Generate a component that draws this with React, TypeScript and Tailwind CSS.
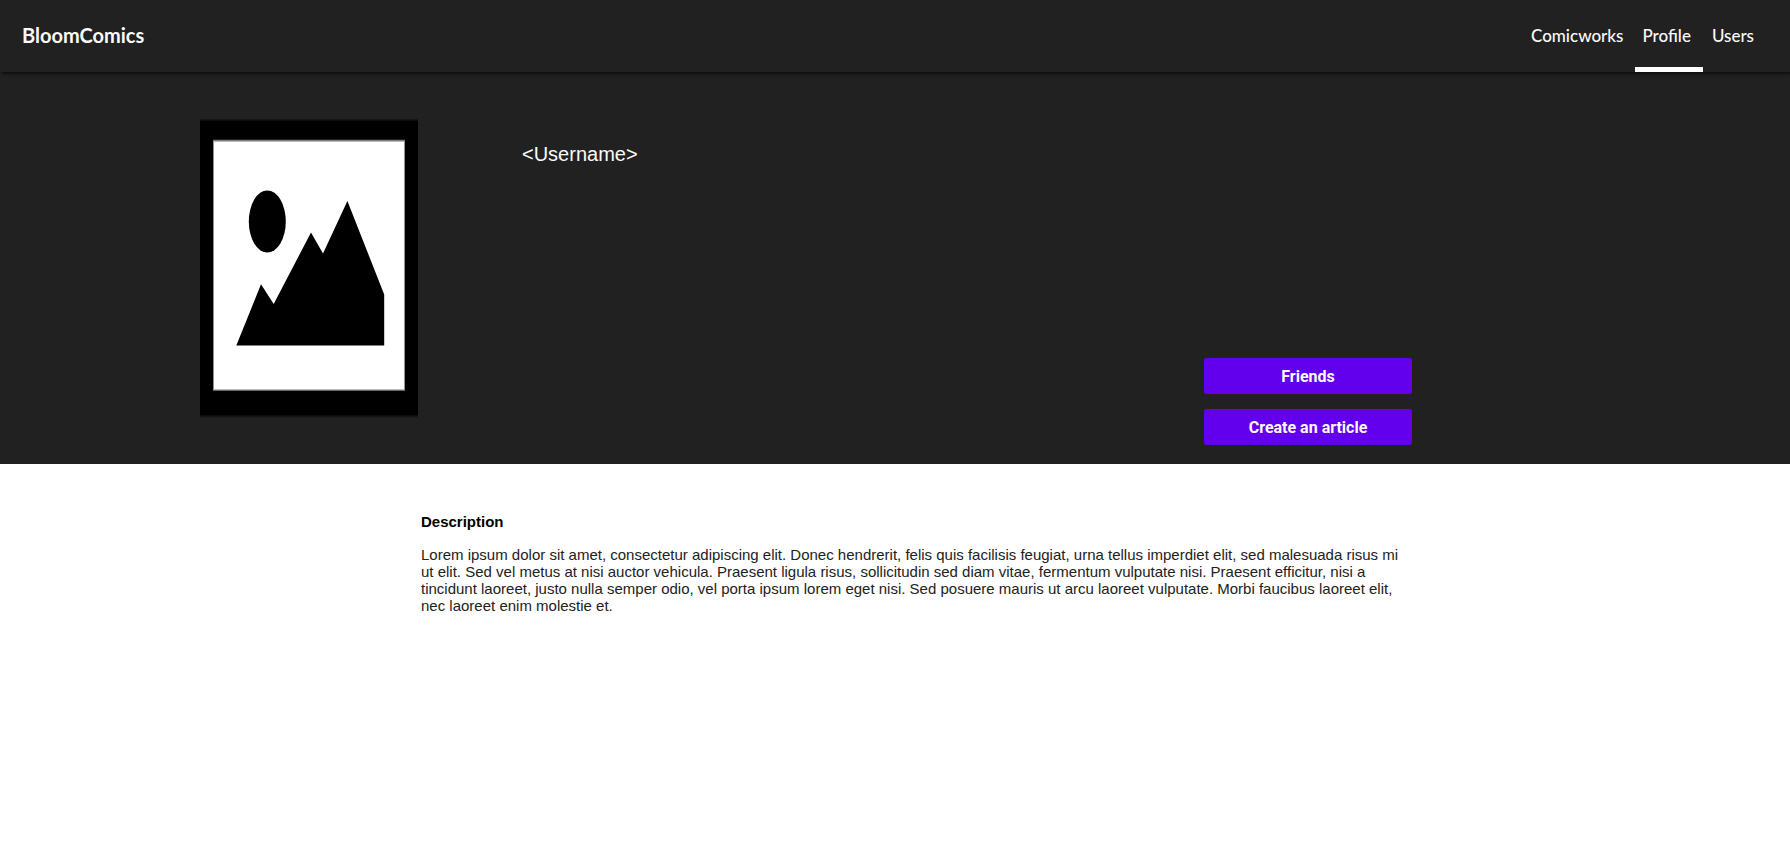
const navLinks = [
  { label: "Comicworks", active: false },
  { label: "Profile", active: true },
  { label: "Users", active: false },
];

function Header() {
  return (
    <header className="relative flex h-18 items-stretch justify-between bg-[#212121] pr-6 pl-[22px] font-['Lato',sans-serif] text-[#fafafa] shadow-[2px_2px_3px_rgba(0,0,0,0.6)]">
      <a href="#" className="flex items-center pb-0.5 text-xl font-bold">
        BloomComics
      </a>
      <nav className="flex text-[17px] font-medium">
        {navLinks.map(({ label, active }) => (
          <a
            key={label}
            href="#"
            aria-current={active ? "page" : undefined}
            className={
              active
                ? "flex items-center border-y-5 border-t-transparent border-b-white pr-3 pl-[7px]"
                : "flex items-center pr-3 pl-[9px]"
            }
          >
            {label}
          </a>
        ))}
      </nav>
    </header>
  );
}

function Portrait() {
  return (
    <svg
      role="img"
      aria-label="Profile picture"
      viewBox="0 0 218 300"
      className="h-[300px] w-[218px] shrink-0"
    >
      <rect y="1" width="218" height="298.500" fill="#161616" />
      <rect y="2.500" width="218" height="295" fill="#000" />
      <rect x="13" y="21.700" width="192" height="251.300" fill="#666" />
      <rect x="13.500" y="22.700" width="191" height="249.300" fill="#bbb" />
      <rect x="14" y="24" width="190" height="247" fill="#fff" />
      <ellipse cx="67.300" cy="103.500" rx="18.500" ry="31" />
      <path d="M36.300 227.500 L61 166.300 L73.700 186 L111 114.500 L123 135.500 L147.400 83 L184.200 176.500 V227.500 Z" />
    </svg>
  );
}

function ActionButton({ children }: { children: string }) {
  return (
    <button
      type="button"
      className="h-9 w-[208px] rounded-xs bg-[#6200ee] pt-0.5 font-['Roboto',sans-serif] text-base font-bold text-[#fafafa]"
    >
      {children}
    </button>
  );
}

export default function App() {
  return (
    <div className="min-h-screen bg-white font-['Liberation_Sans',Arial,sans-serif]">
      <Header />
      <section className="flex bg-[#212121] pt-[46px] pr-[378px] pb-[19px] pl-[200px]">
        <Portrait />
        <div className="flex-1 pl-[104px]">
          <h1 className="pt-[22px] text-xl text-[#fafafa]">&lt;Username&gt;</h1>
        </div>
        <div className="flex h-[327px] flex-col justify-end gap-[15px]">
          <ActionButton>Friends</ActionButton>
          <ActionButton>Create an article</ActionButton>
        </div>
      </section>
      <main className="pt-[49px] pr-[378px] pl-[421px] text-[15px] leading-[17px] text-black">
        <h2 className="font-bold">Description</h2>
        <p className="mt-4 text-[#222]">
          Lorem ipsum dolor sit amet, consectetur adipiscing elit. Donec hendrerit, felis quis
          facilisis feugiat, urna tellus imperdiet elit, sed malesuada risus mi ut elit. Sed vel
          metus at nisi auctor vehicula. Praesent ligula risus, sollicitudin sed diam vitae,
          fermentum vulputate nisi. Praesent efficitur, nisi a tincidunt laoreet, justo nulla
          semper odio, vel porta ipsum lorem eget nisi. Sed posuere mauris ut arcu laoreet
          vulputate. Morbi faucibus laoreet elit, nec laoreet enim molestie et.
        </p>
      </main>
    </div>
  );
}
